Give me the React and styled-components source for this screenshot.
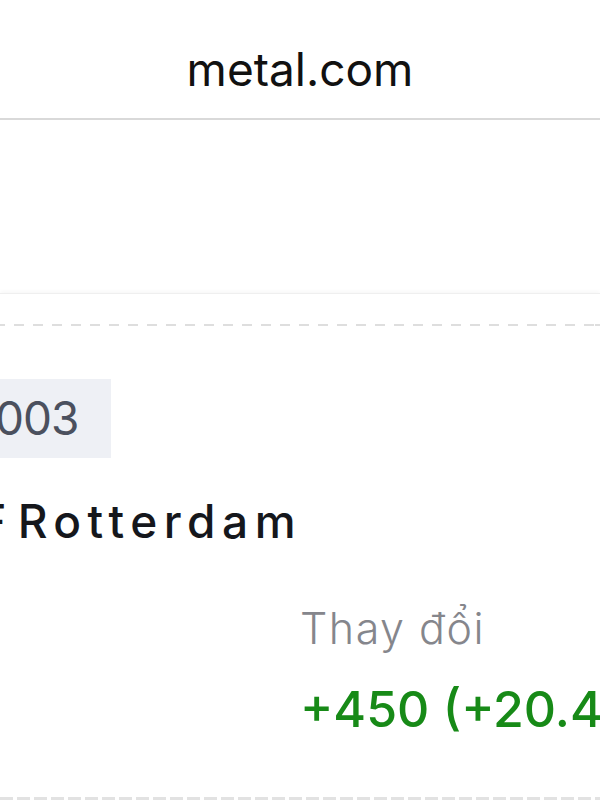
import React from "react";
import styled, { createGlobalStyle } from "styled-components";

const Global = createGlobalStyle`
  html, body { margin: 0; padding: 0; background: #ffffff; }
  body { width: 600px; height: 800px; overflow: hidden; font-family: Inter, "Noto Sans", sans-serif; }
  * { box-sizing: border-box; }
`;

const Page = styled.div`
  width: 600px;
  height: 800px;
  overflow: hidden;
  display: flex;
  flex-direction: column;
  background: #ffffff;
`;

const Header = styled.header`
  height: 120px;
  padding-top: 46px;
  border-bottom: 2px solid #d9d9d9;
  text-align: center;
  font-family: Inter, "Liberation Sans", sans-serif;
  font-size: 46px;
  line-height: 46px;
  color: #111111;
  flex: none;
`;

const Blank = styled.div`
  height: 173px;
  flex: none;
`;

const Card = styled.section`
  flex: 1;
  border-top: 1px solid #efefef;
  box-shadow: 0 -2px 4px rgba(0, 0, 0, 0.03);
  padding-top: 30px;
  display: flex;
  flex-direction: column;
`;

const Dashes = styled.div`
  height: 2px;
  flex: none;
  background: repeating-linear-gradient(
    to right,
    #dedede 0 10px,
    transparent 10px 19px
  );
  background-position: ${(p) => p.$offset || 0}px 0;
`;

const Body = styled.div`
  margin-left: -70px;
  padding-top: 53px;
  display: flex;
  flex-direction: column;
  align-items: flex-start;
  height: 471px;
`;

const Badge = styled.div`
  background: #eef0f5;
  padding: 16px 33px 17px 37px;
  font-size: 46px;
  line-height: 46px;
  letter-spacing: -1px;
  color: #4b505e;
  font-weight: 400;
`;

const Title = styled.div`
  margin-top: 40px;
  margin-left: -10px;
  font-size: 46px;
  line-height: 46px;
  letter-spacing: 6.5px;
  word-spacing: -14px;
  font-weight: 500;
  color: #15171c;
  white-space: nowrap;
`;

const Stats = styled.div`
  margin-top: 63px;
  display: grid;
  grid-template-columns: 370px auto;
`;

const Stat = styled.div`
  display: flex;
  flex-direction: column;
`;

const StatLabel = styled.div`
  font-size: 43px;
  line-height: 43px;
  letter-spacing: 1.5px;
  font-weight: 300;
  color: #85868c;
  white-space: nowrap;
`;

const StatValue = styled.div`
  margin-top: 34px;
  font-size: 50px;
  line-height: 50px;
  font-weight: 500;
  color: ${(p) => (p.$up ? "#178a17" : "#15171c")};
  white-space: nowrap;
`;

const BottomDashes = styled(Dashes)`
  margin-top: auto;
  height: 4px;
  background: repeating-linear-gradient(
    to right,
    #e2e2e2 0 13px,
    transparent 13px 17px
  );
`;

export default function App() {
  return (
    <Page>
      <Global />
      <Header>metal.com</Header>
      <Blank />
      <Card>
        <Dashes $offset={-5} />
        <Body>
          <Badge>0003</Badge>
          <Title>CIF Rotterdam</Title>
          <Stats>
            <Stat />
            <Stat>
              <StatLabel>Thay đổi</StatLabel>
              <StatValue $up>+450 (+20.45%)</StatValue>
            </Stat>
          </Stats>
        </Body>
        <BottomDashes />
      </Card>
    </Page>
  );
}
